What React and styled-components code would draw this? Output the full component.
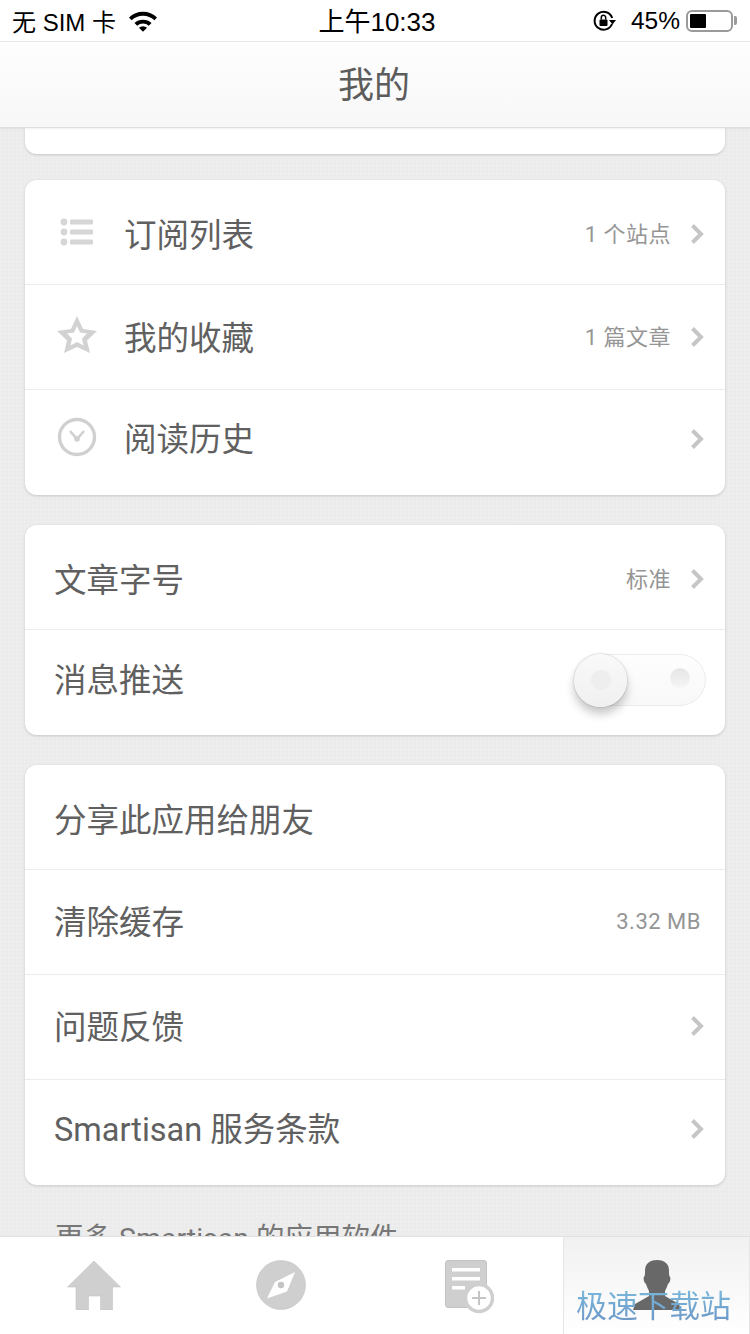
import React from "react";
import styled, { createGlobalStyle } from "styled-components";

const GlobalStyle = createGlobalStyle`
  html, body {
    margin: 0;
    padding: 0;
    background: #ececec;
  }
  * {
    box-sizing: border-box;
  }
`;

const CJK = `Roboto, "Noto Sans CJK SC", sans-serif`;

function Chevron() {
  return (
    <ChevronIcon width="16" height="22" viewBox="0 0 16 22">
      <path d="M3.500 2.500l8.500 8.500-8.500 8.500" fill="none" stroke="#c6c6c6" strokeWidth="4" />
    </ChevronIcon>
  );
}

function ListIcon() {
  return (
    <svg width="34" height="30" viewBox="0 0 34 30" fill="#d6d6d6">
      <circle cx="4" cy="5" r="3.400" />
      <circle cx="4" cy="15" r="3.400" />
      <circle cx="4" cy="25" r="3.400" />
      <rect x="10" y="2.500" width="23" height="5" rx="1" />
      <rect x="10" y="12.500" width="23" height="5" rx="1" />
      <rect x="10" y="22.500" width="23" height="5" rx="1" />
    </svg>
  );
}

function StarIcon() {
  return (
    <svg width="40" height="38" viewBox="0 0 40 38">
      <path
        d="M20 0l6 13 14 2-10 9.500L33 37l-13-6-13 6 3-12.500L0 15l14-2zM20 10l-3 6.500-7 1 5 5-1.500 7 6.500-3.500 6.500 3.500-1.500-7 5-5-7-1z"
        fill="#d2d2d2"
        fillRule="evenodd"
      />
    </svg>
  );
}

function ClockIcon() {
  return (
    <svg width="40" height="40" viewBox="0 0 40 40">
      <circle cx="20" cy="20" r="17.500" fill="none" stroke="#d0d0d0" strokeWidth="3.400" />
      <path d="M13 14l7 8 7-8" fill="none" stroke="#d0d0d0" strokeWidth="2.600" />
      <circle cx="20" cy="22" r="2.800" fill="#d0d0d0" />
    </svg>
  );
}

function WifiIcon() {
  return (
    <svg width="30" height="22" viewBox="0 0 30 22">
      <path d="M1 7.500a20 20 0 0 1 28 0l-2.600 2.800a16.400 16.400 0 0 0-22.800 0z" fill="#000" />
      <path d="M6.500 13a12.600 12.600 0 0 1 17 0l-2.700 2.800a8.600 8.600 0 0 0-11.600 0z" fill="#000" />
      <path d="M11 17.800a5.800 5.800 0 0 1 8 0l-4 4z" fill="#000" />
    </svg>
  );
}

function RotationLockIcon() {
  return (
    <svg width="24" height="24" viewBox="0 0 24 24">
      <path d="M20 15a9 9 0 1 1 .2-6" fill="none" stroke="#000" strokeWidth="2" />
      <path d="M17 11h7l-3.500 4.500z" fill="#000" />
      <rect x="7.500" y="10.500" width="8" height="6.500" rx="1" fill="#000" />
      <path d="M9.300 10.500V8.500a2.200 2.200 0 0 1 4.400 0v2" fill="none" stroke="#000" strokeWidth="1.500" />
    </svg>
  );
}

function HomeIcon() {
  return (
    <svg width="54" height="50" viewBox="0 0 54 50">
      <path
        d="M27 1L53.500 27H45.500V50H33.500V36H21.500V50H9V27H.5z"
        fill="#cfcfcf"
        stroke="#c4c4c4"
        strokeWidth=".6"
      />
    </svg>
  );
}

function CompassIcon() {
  return (
    <svg width="50" height="50" viewBox="0 0 50 50">
      <circle cx="25" cy="25" r="24.500" fill="#cfcfcf" stroke="#c4c4c4" strokeWidth=".6" />
      <path d="M39 12L31 31.500 11 38.500 19 22z" fill="#fff" />
      <circle cx="25" cy="25" r="3.200" fill="#c4c4c4" />
    </svg>
  );
}

function ComposeIcon() {
  return (
    <svg width="50" height="54" viewBox="0 0 50 54">
      <rect x="1.500" y=".5" width="41" height="47" rx="2.500" fill="#cfcfcf" stroke="#c4c4c4" />
      <rect x="8" y="8" width="28" height="3.500" fill="#fff" />
      <rect x="8" y="17" width="28" height="3.500" fill="#fff" />
      <rect x="8" y="26" width="13" height="3.500" fill="#fff" />
      <circle cx="35" cy="38" r="13.500" fill="#fff" stroke="#cfcfcf" strokeWidth="3.500" />
      <path d="M35 31v14M28 38h14" stroke="#c4c4c4" strokeWidth="2" />
    </svg>
  );
}

function PersonIcon() {
  return (
    <svg width="52" height="50" viewBox="0 0 52 50">
      <path
        d="M26 0c8 0 12 4 12 11 0 3 0 5 1 6 1 1 0 6-2 7-1 3-2 5-3 7v5l14 8 2 6H2l2-6 14-8v-5c-1-2-2-4-3-7-2-1-3-6-2-7 1-1 1-3 1-6C14 4 18 0 26 0z"
        fill="#686868"
      />
    </svg>
  );
}

function Row({ icon, label, value, arrow, lift }) {
  return (
    <RowWrap $lift={lift}>
      {icon && <RowIcon>{icon}</RowIcon>}
      <RowLabel>{label}</RowLabel>
      {value && <RowValue>{value}</RowValue>}
      {arrow && <Chevron />}
    </RowWrap>
  );
}

export default function App() {
  return (
    <Screen>
      <GlobalStyle />
      <StatusBar>
        <StatusSide>
          <span>无 SIM 卡</span>
          <WifiIcon />
        </StatusSide>
        <StatusTime>上午10:33</StatusTime>
        <StatusRight>
          <RotationLockIcon />
          <BatteryText>45%</BatteryText>
          <Battery>
            <BatteryFill />
          </Battery>
          <BatteryCap />
        </StatusRight>
      </StatusBar>
      <NavBar>我的</NavBar>
      <Content>
        <ClippedCard />
        <Card>
          <Row icon={<ListIcon />} label="订阅列表" value="1 个站点" arrow />
          <Row icon={<StarIcon />} label="我的收藏" value="1 篇文章" arrow lift={2} />
          <Row icon={<ClockIcon />} label="阅读历史" arrow lift={6} />
        </Card>
        <Card>
          <Row label="文章字号" value="标准" arrow />
          <RowWrap $lift={5}>
            <RowLabel>消息推送</RowLabel>
            <SwitchTrack>
              <SwitchDot />
              <SwitchKnob>
                <KnobDot />
              </SwitchKnob>
            </SwitchTrack>
          </RowWrap>
        </Card>
        <Card>
          <Row label="分享此应用给朋友" />
          <Row label="清除缓存" value="3.32 MB" lift={3} />
          <Row label="问题反馈" arrow lift={3} />
          <Row label="Smartisan 服务条款" arrow lift={6} />
        </Card>
        <MoreText>更多 Smartisan 的应用软件</MoreText>
      </Content>
      <TabBar>
        <Tab>
          <HomeIcon />
        </Tab>
        <Tab>
          <CompassIcon />
        </Tab>
        <Tab>
          <ComposeIcon />
        </Tab>
        <Tab $active>
          <PersonIcon />
        </Tab>
      </TabBar>
      <Watermark>极速下载站</Watermark>
    </Screen>
  );
}

const Screen = styled.div`
  position: relative;
  width: 750px;
  height: 1334px;
  overflow: hidden;
  display: flex;
  flex-direction: column;
  font-family: ${CJK};
  background-color: #ebebeb;
  background-image: repeating-linear-gradient(0deg, rgba(255, 255, 255, 0.14) 0 1px, transparent 1px 4px),
    repeating-linear-gradient(90deg, rgba(255, 255, 255, 0.14) 0 1px, transparent 1px 4px);
`;

const StatusBar = styled.div`
  height: 41px;
  flex: none;
  background: #fff;
  color: #000;
  display: grid;
  grid-template-columns: 1fr auto 1fr;
  align-items: center;
  padding: 0 13px 0 12px;
  font-family: "Liberation Sans", "Noto Sans CJK SC", sans-serif;
`;

const StatusSide = styled.div`
  display: flex;
  align-items: center;
  gap: 12px;
  font-size: 24px;
  white-space: nowrap;
`;

const StatusTime = styled.div`
  font-size: 26px;
  margin: 0 0 3px 5px;
`;

const StatusRight = styled.div`
  display: flex;
  align-items: center;
  justify-content: flex-end;
`;

const BatteryText = styled.span`
  font-size: 24.500px;
  margin: 0 6px 0 15px;
`;

const Battery = styled.div`
  width: 47px;
  height: 22px;
  border: 2px solid #9a9a9a;
  border-radius: 6px;
  padding: 2px;
`;

const BatteryFill = styled.div`
  width: 16px;
  height: 100%;
  background: #000;
  border-radius: 1px;
`;

const BatteryCap = styled.div`
  width: 3px;
  height: 9px;
  background: #9a9a9a;
  margin-left: 1px;
  border-radius: 0 2px 2px 0;
`;

const NavBar = styled.div`
  position: relative;
  z-index: 2;
  height: 87px;
  flex: none;
  border-top: 1px solid #e8e8e8;
  border-bottom: 1px solid #dedede;
  background: linear-gradient(#fefefe, #f7f7f7);
  box-shadow: 0 1px 2px rgba(0, 0, 0, 0.06);
  display: flex;
  align-items: center;
  justify-content: center;
  color: #5c5c5c;
  font-size: 36px;
  padding: 0 2px 6px 0;
`;

const Content = styled.div`
  flex: 1;
  min-height: 0;
  overflow: hidden;
  padding: 0 25px;
  display: flex;
  flex-direction: column;
`;

const Card = styled.div`
  flex: none;
  background: #fff;
  border-radius: 12px;
  box-shadow: 0 1px 3px rgba(0, 0, 0, 0.16);
  margin-top: 30px;
  &:nth-child(2) {
    margin-top: 26px;
  }
`;

const ClippedCard = styled.div`
  flex: none;
  height: 26px;
  background: #fff;
  border-radius: 0 0 12px 12px;
  box-shadow: 0 1px 3px rgba(0, 0, 0, 0.16);
`;

const RowWrap = styled.div`
  height: 105px;
  display: flex;
  align-items: center;
  padding: 0 20px ${(props) => (props.$lift || 0) * 2}px 30px;
  border-bottom: 1px solid #ececec;
  &:last-child {
    border-bottom: none;
  }
`;

const RowIcon = styled.div`
  width: 42px;
  margin: 0 27px 0 1px;
  display: flex;
  justify-content: center;
`;

const RowLabel = styled.div`
  flex: 1;
  margin-left: -1px;
  font-size: 32.500px;
  color: #606060;
  white-space: nowrap;
`;

const RowValue = styled.div`
  font-size: 22px;
  color: #959595;
  letter-spacing: 0.5px;
  &:last-child {
    margin: 4px 4px 0 0;
  }
`;

const ChevronIcon = styled.svg`
  margin: 4px 0 0 18px;
  flex: none;
`;

const SwitchTrack = styled.div`
  position: relative;
  width: 132px;
  height: 52px;
  margin: 4px -1px 0 0;
  border-radius: 26px;
  border: 1px solid #ececec;
  background: linear-gradient(#fefefe, #f8f8f8);
  display: flex;
  align-items: center;
  justify-content: flex-end;
  padding: 0 15px 4px 0;
`;

const SwitchDot = styled.div`
  width: 20px;
  height: 20px;
  border-radius: 50%;
  background: linear-gradient(#e6e6e6, #f5f5f5);
`;

const SwitchKnob = styled.div`
  position: absolute;
  left: -1px;
  top: -1px;
  width: 53px;
  height: 53px;
  border-radius: 50%;
  background: linear-gradient(#f9f9f9, #f0f0f0);
  box-shadow: 0 7px 10px rgba(0, 0, 0, 0.22), 0 0 2px rgba(0, 0, 0, 0.3);
  display: flex;
  align-items: center;
  justify-content: center;
`;

const KnobDot = styled.div`
  width: 20px;
  height: 20px;
  border-radius: 50%;
  background: #eeeeee;
`;

const MoreText = styled.div`
  flex: none;
  margin: 30px 0 0 30px;
  font-size: 28.500px;
  color: #777;
  white-space: nowrap;
`;

const TabBar = styled.div`
  height: 98px;
  flex: none;
  display: grid;
  grid-template-columns: 187px 187px 189px 187px;
  background: #fff;
  border-top: 1px solid #e2e2e2;
`;

const Tab = styled.div`
  display: flex;
  justify-content: center;
  padding-top: 23px;
  background: ${(props) => (props.$active ? "linear-gradient(#f1f1f1, #fff)" : "transparent")};
  border-left: ${(props) => (props.$active ? "1px solid #e6e6e6" : "none")};
  border-right: ${(props) => (props.$active ? "1px solid #e6e6e6" : "none")};
`;

const Watermark = styled.div`
  position: absolute;
  left: 576px;
  top: 1281px;
  font-size: 31px;
  line-height: 46px;
  white-space: nowrap;
  font-family: "Noto Sans CJK SC", sans-serif;
  background: linear-gradient(#7cc0e0, #6c93c4);
  -webkit-background-clip: text;
  background-clip: text;
  color: transparent;
`;
